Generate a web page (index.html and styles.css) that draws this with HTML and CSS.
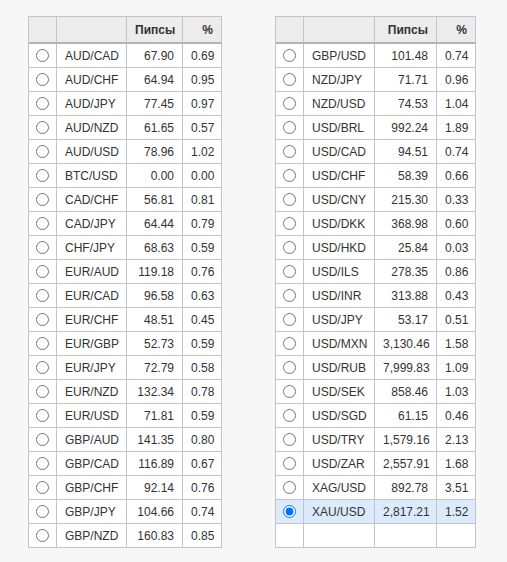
FILE: index.html
```html
<!DOCTYPE html>
<html>
<head>
<meta charset="utf-8">
<link rel="stylesheet" href="styles.css">
</head>
<body>
<div class="tables">
<table class="grid grid-left">
<colgroup><col class="c-radio"><col class="c-sym"><col class="c-pips-l"><col class="c-pct"></colgroup>
<thead><tr><th></th><th></th><th class="num">Пипсы</th><th class="num">%</th></tr></thead>
<tbody>
<tr><td class="rc"><input type="radio" name="sym"></td><td>AUD/CAD</td><td class="num">67.90</td><td class="num">0.69</td></tr>
<tr><td class="rc"><input type="radio" name="sym"></td><td>AUD/CHF</td><td class="num">64.94</td><td class="num">0.95</td></tr>
<tr><td class="rc"><input type="radio" name="sym"></td><td>AUD/JPY</td><td class="num">77.45</td><td class="num">0.97</td></tr>
<tr><td class="rc"><input type="radio" name="sym"></td><td>AUD/NZD</td><td class="num">61.65</td><td class="num">0.57</td></tr>
<tr><td class="rc"><input type="radio" name="sym"></td><td>AUD/USD</td><td class="num">78.96</td><td class="num">1.02</td></tr>
<tr><td class="rc"><input type="radio" name="sym"></td><td>BTC/USD</td><td class="num">0.00</td><td class="num">0.00</td></tr>
<tr><td class="rc"><input type="radio" name="sym"></td><td>CAD/CHF</td><td class="num">56.81</td><td class="num">0.81</td></tr>
<tr><td class="rc"><input type="radio" name="sym"></td><td>CAD/JPY</td><td class="num">64.44</td><td class="num">0.79</td></tr>
<tr><td class="rc"><input type="radio" name="sym"></td><td>CHF/JPY</td><td class="num">68.63</td><td class="num">0.59</td></tr>
<tr><td class="rc"><input type="radio" name="sym"></td><td>EUR/AUD</td><td class="num">119.18</td><td class="num">0.76</td></tr>
<tr><td class="rc"><input type="radio" name="sym"></td><td>EUR/CAD</td><td class="num">96.58</td><td class="num">0.63</td></tr>
<tr><td class="rc"><input type="radio" name="sym"></td><td>EUR/CHF</td><td class="num">48.51</td><td class="num">0.45</td></tr>
<tr><td class="rc"><input type="radio" name="sym"></td><td>EUR/GBP</td><td class="num">52.73</td><td class="num">0.59</td></tr>
<tr><td class="rc"><input type="radio" name="sym"></td><td>EUR/JPY</td><td class="num">72.79</td><td class="num">0.58</td></tr>
<tr><td class="rc"><input type="radio" name="sym"></td><td>EUR/NZD</td><td class="num">132.34</td><td class="num">0.78</td></tr>
<tr><td class="rc"><input type="radio" name="sym"></td><td>EUR/USD</td><td class="num">71.81</td><td class="num">0.59</td></tr>
<tr><td class="rc"><input type="radio" name="sym"></td><td>GBP/AUD</td><td class="num">141.35</td><td class="num">0.80</td></tr>
<tr><td class="rc"><input type="radio" name="sym"></td><td>GBP/CAD</td><td class="num">116.89</td><td class="num">0.67</td></tr>
<tr><td class="rc"><input type="radio" name="sym"></td><td>GBP/CHF</td><td class="num">92.14</td><td class="num">0.76</td></tr>
<tr><td class="rc"><input type="radio" name="sym"></td><td>GBP/JPY</td><td class="num">104.66</td><td class="num">0.74</td></tr>
<tr><td class="rc"><input type="radio" name="sym"></td><td>GBP/NZD</td><td class="num">160.83</td><td class="num">0.85</td></tr>
</tbody>
</table>
<table class="grid grid-right">
<colgroup><col class="c-radio"><col class="c-sym-r"><col class="c-pips-r"><col class="c-pct"></colgroup>
<thead><tr><th></th><th></th><th class="num">Пипсы</th><th class="num">%</th></tr></thead>
<tbody>
<tr><td class="rc"><input type="radio" name="sym"></td><td>GBP/USD</td><td class="num">101.48</td><td class="num">0.74</td></tr>
<tr><td class="rc"><input type="radio" name="sym"></td><td>NZD/JPY</td><td class="num">71.71</td><td class="num">0.96</td></tr>
<tr><td class="rc"><input type="radio" name="sym"></td><td>NZD/USD</td><td class="num">74.53</td><td class="num">1.04</td></tr>
<tr><td class="rc"><input type="radio" name="sym"></td><td>USD/BRL</td><td class="num">992.24</td><td class="num">1.89</td></tr>
<tr><td class="rc"><input type="radio" name="sym"></td><td>USD/CAD</td><td class="num">94.51</td><td class="num">0.74</td></tr>
<tr><td class="rc"><input type="radio" name="sym"></td><td>USD/CHF</td><td class="num">58.39</td><td class="num">0.66</td></tr>
<tr><td class="rc"><input type="radio" name="sym"></td><td>USD/CNY</td><td class="num">215.30</td><td class="num">0.33</td></tr>
<tr><td class="rc"><input type="radio" name="sym"></td><td>USD/DKK</td><td class="num">368.98</td><td class="num">0.60</td></tr>
<tr><td class="rc"><input type="radio" name="sym"></td><td>USD/HKD</td><td class="num">25.84</td><td class="num">0.03</td></tr>
<tr><td class="rc"><input type="radio" name="sym"></td><td>USD/ILS</td><td class="num">278.35</td><td class="num">0.86</td></tr>
<tr><td class="rc"><input type="radio" name="sym"></td><td>USD/INR</td><td class="num">313.88</td><td class="num">0.43</td></tr>
<tr><td class="rc"><input type="radio" name="sym"></td><td>USD/JPY</td><td class="num">53.17</td><td class="num">0.51</td></tr>
<tr><td class="rc"><input type="radio" name="sym"></td><td>USD/MXN</td><td class="num">3,130.46</td><td class="num">1.58</td></tr>
<tr><td class="rc"><input type="radio" name="sym"></td><td>USD/RUB</td><td class="num">7,999.83</td><td class="num">1.09</td></tr>
<tr><td class="rc"><input type="radio" name="sym"></td><td>USD/SEK</td><td class="num">858.46</td><td class="num">1.03</td></tr>
<tr><td class="rc"><input type="radio" name="sym"></td><td>USD/SGD</td><td class="num">61.15</td><td class="num">0.46</td></tr>
<tr><td class="rc"><input type="radio" name="sym"></td><td>USD/TRY</td><td class="num">1,579.16</td><td class="num">2.13</td></tr>
<tr><td class="rc"><input type="radio" name="sym"></td><td>USD/ZAR</td><td class="num">2,557.91</td><td class="num">1.68</td></tr>
<tr><td class="rc"><input type="radio" name="sym"></td><td>XAG/USD</td><td class="num">892.78</td><td class="num">3.51</td></tr>
<tr class="selected"><td class="rc"><input type="radio" name="sym" checked></td><td>XAU/USD</td><td class="num">2,817.21</td><td class="num">1.52</td></tr>
<tr><td class="rc"></td><td></td><td></td><td></td></tr>
</tbody>
</table>
</div>
</body>
</html>
```
FILE: styles.css
```css
html, body {
  margin: 0;
  padding: 0;
  background: #f7f7f7;
}
body {
  font-family: "Liberation Sans", Arial, sans-serif;
  font-size: 12px;
  color: #333;
}
.tables {
  display: flex;
  align-items: flex-start;
  gap: 53px;
  padding: 16px 0 0 28px;
}
.grid {
  border-collapse: separate;
  border-spacing: 0;
  table-layout: fixed;
  border-top: 1px solid #c4c4c4;
  border-left: 1px solid #c4c4c4;
  background: #fff;
}
.grid-left { width: 194px; }
.grid-right { width: 201px; }
.c-radio { width: 28px; }
.c-sym { width: 70px; }
.c-sym-r { width: 71px; }
.c-pips-l { width: 56px; }
.c-pips-r { width: 62px; }
.c-pct { width: 39px; }
.grid th, .grid td {
  box-sizing: border-box;
  border-right: 1px solid #c4c4c4;
  border-bottom: 1px solid #c4c4c4;
  padding: 0 8px;
  white-space: nowrap;
  overflow: hidden;
  text-align: left;
  vertical-align: middle;
}
.grid th {
  height: 27px;
  background: #ececec;
  font-weight: bold;
  border-bottom: 2px solid #b3b3b3;
}
.grid td {
  height: 24px;
}
.grid .num { text-align: right; }
.grid .rc {
  padding: 0;
  text-align: center;
}
.rc input {
  display: block;
  margin: 0 auto;
  width: 13px;
  height: 13px;
}
.selected td {
  background: #dcebfb;
}
```
